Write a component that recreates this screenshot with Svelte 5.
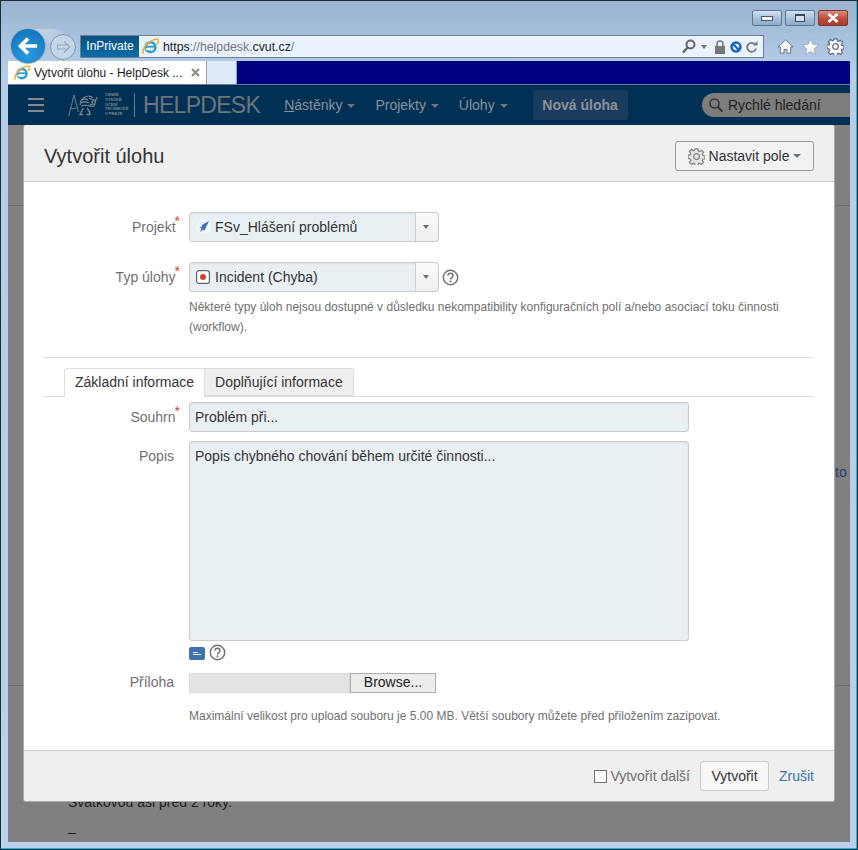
<script>
	let nav = ['Projekty', 'Úlohy'];
</script>

{#snippet ie(size)}
	<svg class="ie" width={size} height={size} viewBox="0 0 16 16">
		<circle cx="8" cy="8.6" r="4.6" fill="none" stroke="#2f9ad8" stroke-width="2.4" />
		<path d="M3.6 8.2h9" stroke="#2f9ad8" stroke-width="1.7" />
		<path d="M3.6 10.6h3.6" stroke="#fff" stroke-width="1.6" />
		<path d="M1.4 14.6C-.4 12 3 6.2 8 3.2c3-1.8 6.4-2.8 7.3-1.7.7.9-.1 2.7-1.3 4.3" fill="none" stroke="#eeb02c" stroke-width="1.5" />
	</svg>
{/snippet}

{#snippet help(color)}
	<svg width="17" height="17" viewBox="0 0 17 17">
		<circle cx="8.5" cy="8.5" r="7.2" fill="#fff" stroke={color} stroke-width="1.4" />
		<path d="M6 6.6c0-3.2 5-3.2 5 0 0 2-2.5 1.9-2.5 3.9" fill="none" stroke={color} stroke-width="1.5" />
		<rect x="7.6" y="11.5" width="1.8" height="1.8" fill={color} />
	</svg>
{/snippet}

{#snippet gear(size, color, fill)}
	<svg width={size} height={size} viewBox="0 0 20 20">
		<path d="M8.3 1h3.4l.5 2.6 1.500.6 2.200-1.500 2.400 2.400-1.500 2.200.6 1.500 2.600.5v3.400l-2.600.5-.6 1.500 1.500 2.200-2.400 2.400-2.200-1.500-1.500.6-.5 2.600H8.300l-.5-2.600-1.500-.6-2.200 1.500-2.400-2.400 1.500-2.200-.6-1.500L0 11.700V8.300l2.600-.5.6-1.500-1.500-2.200 2.400-2.400 2.200 1.500 1.500-.6z" fill={fill} stroke={color} stroke-width="1.5" />
		<circle cx="10" cy="10" r="3.4" fill={fill} stroke={color} stroke-width="1.5" />
	</svg>
{/snippet}

<div class="window">
	<header class="chrome">
		<div class="caption">
			<span class="capbtn"><i class="min"></i></span>
			<span class="capbtn"><i class="max"></i></span>
			<span class="capbtn close">
				<svg width="14" height="10" viewBox="0 0 14 10"><path d="M2.5 1l9 8M11.500 1l-9 8" stroke="#fff" stroke-width="2.6" /></svg>
			</span>
		</div>
		<div class="toolbar">
			<span class="shoulder"></span>
			<span class="back">
				<svg width="22" height="20" viewBox="0 0 22 20"><path d="M11 2.5 3.500 10l7.500 7.500M4 10h16" fill="none" stroke="#fff" stroke-width="3.6" /></svg>
			</span>
			<span class="forward">
				<svg width="15" height="14" viewBox="0 0 15 14"><path d="M8 1.500l5.500 5.500L8 12.500M13 5H1.500v4H13" fill="none" stroke="#9aa9b9" stroke-width="1.2" /></svg>
			</span>
			<div class="address">
				<span class="inprivate">InPrivate</span>
				<span class="favicon">{@render ie(17)}</span>
				<span class="url"><b>https</b>://helpdesk.<b>cvut.cz</b>/</span>
				<span class="addr-icons">
					<svg width="14" height="15" viewBox="0 0 14 15"><circle cx="8.5" cy="5.5" r="4" fill="none" stroke="#666" stroke-width="2" /><path d="M5.5 8.500 1 13.500" stroke="#666" stroke-width="2.4" /></svg>
					<i class="caret small"></i>
					<svg class="lock" width="12" height="14" viewBox="0 0 12 14"><path d="M3 6V4a3 3 0 0 1 6 0v2" fill="none" stroke="#777" stroke-width="1.6" /><rect x="1" y="6" width="10" height="8" fill="#777" /></svg>
					<svg class="block" width="12" height="12" viewBox="0 0 13 13"><circle cx="6.5" cy="6.5" r="4.8" fill="#fff" stroke="#1565c0" stroke-width="2.8" /><path d="M3 3l7 7" stroke="#1565c0" stroke-width="2.6" /></svg>
					<svg class="refresh" width="13" height="14" viewBox="0 0 13 14"><path d="M10.500 5A4.500 4.500 0 1 0 11 8.500" fill="none" stroke="#777" stroke-width="1.8" /><path d="M8 5.500h4.500V1z" fill="#777" /></svg>
				</span>
			</div>
			<div class="tools">
				<svg width="17" height="17" viewBox="0 0 18 17"><path d="M9 1.500 1 9h2.500v6.500h4v-4h3v4h4V9H17z" fill="#fff" stroke="#5f7080" /></svg>
				<svg width="17" height="17" viewBox="0 0 18 17"><path d="M9 .8l2.500 5.400 5.800.7-4.300 4 1.200 5.800L9 13.800l-5.200 2.900L5 10.900l-4.300-4 5.800-.7z" fill="#fff" stroke="#8a99a8" stroke-width=".7" /></svg>
				{@render gear(17, '#5f7080', '#fff')}
			</div>
		</div>
		<div class="tabstrip">
			<div class="tab">
				{@render ie(16)}
				<span class="tab-title">Vytvořit úlohu - HelpDesk ...</span>
				<svg width="9" height="9" viewBox="0 0 9 9"><path d="M1 1l7 7M8 1 1 8" stroke="#8a8a8a" stroke-width="2" /></svg>
			</div>
			<div class="newtab"></div>
		</div>
	</header>

	<main class="page">
		<nav class="navbar">
			<span class="burger"><i></i><i></i><i></i></span>
			<div class="logo">
				<svg width="32" height="24" viewBox="0 0 32 24">
					<g fill="none" stroke="#7f878d">
						<path d="M6 2 .8 23M6 2l4.500 17M2.500 15c2 1 4 1 6-.5" stroke-width=".9" />
						<path d="M12 12c0-5 4-9 9-9 1.500 0 3 .5 3.500 2" stroke-width="1.2" />
						<path d="M14 7c2-1.500 4-1.500 6 0M13 10c2-1.500 5-1.500 8 0M13 13c3-1 6-1 9 0" stroke-width="1.2" />
						<path d="M15 15c-1 3-2 5-3 6.500h3M19 15c2 2 3 4 3 6.500h-3.500M22 13c3 1 5 0 5-3 0-2 1-3 2-6" stroke-width="1.3" />
						<path d="M21 5.500l5 1.500-2 2 1 2-3.500 1" stroke-width="1.2" />
					</g>
				</svg>
				<span class="logo-text">ČESKÉ<br />VYSOKÉ<br />UČENÍ<br />TECHNICKÉ<br />V PRAZE</span>
			</div>
			<span class="brand">HELPDESK</span>
			<span class="nav-item first"><u>N</u>ástěnky <i class="caret"></i></span>
			{#each nav as item}
				<span class="nav-item">{item} <i class="caret"></i></span>
			{/each}
			<span class="new-issue">Nová úloha</span>
			<span class="search">
				<svg width="16" height="16" viewBox="0 0 16 16"><circle cx="6.5" cy="6.5" r="4.5" fill="none" stroke="#333" stroke-width="1.5" /><path d="M10 10l4.500 4.500" stroke="#333" stroke-width="2" /></svg>
				Rychlé hledání
			</span>
		</nav>

		<div class="behind">
			<hr class="line-a" />
			<span class="link-to">to</span>
			<hr class="line-b" />
			<p class="old-a">Svatkovou asi před 2 roky.</p>
			<p class="old-b">_</p>
		</div>

		<section class="dialog">
			<div class="dialog-head">
				<h2>Vytvořit úlohu</h2>
				<button class="config">
					{@render gear(17, '#858585', '#e4e4e4')}
					Nastavit pole <i class="caret"></i>
				</button>
			</div>
			<div class="dialog-body">
				<div class="row">
					<label>Projekt<sup>*</sup></label>
					<div class="select">
						<span class="value project">
							<svg width="16" height="16" viewBox="0 0 16 16"><circle cx="8" cy="8" r="7.5" fill="#f2f6fa" /><path d="M13 2 6.500 5.500l-1 2.500-2 .5 2 1L4 13l3.500-2.500 1 1.500 1-3z" fill="#3e73ad" /></svg>
							FSv_Hlášení problémů
						</span>
						<span class="arrow"><i class="caret small dark"></i></span>
					</div>
				</div>
				<div class="row second">
					<label>Typ úlohy<sup>*</sup></label>
					<div class="select">
						<span class="value">
							<svg width="14" height="14" viewBox="0 0 14 14"><rect x=".6" y=".6" width="12.8" height="12.8" rx="2.5" fill="#fff" stroke="#666" stroke-width="1.2" /><circle cx="7" cy="7" r="3" fill="#d04437" /></svg>
							Incident (Chyba)
						</span>
						<span class="arrow"><i class="caret small dark"></i></span>
					</div>
					<span class="help">{@render help('#707070')}</span>
				</div>
				<p class="note type-note">Některé typy úloh nejsou dostupné v důsledku nekompatibility konfiguračních polí a/nebo asociací toku činnosti (workflow).</p>
				<hr class="divider" />
				<div class="tabs">
					<span class="form-tab active">Základní informace</span>
					<span class="form-tab">Doplňující informace</span>
				</div>
				<div class="row summary">
					<label>Souhrn<sup>*</sup></label>
					<div class="input">Problém při...</div>
				</div>
				<div class="row description">
					<label>Popis</label>
					<div class="input area">Popis chybného chování během určité činnosti...</div>
				</div>
				<div class="under-area">
					<span class="wiki"><i></i><i></i></span>
					{@render help('#707070')}
				</div>
				<div class="row attach">
					<label>Příloha</label>
					<div class="file"><span class="file-name"></span><span class="browse">Browse...</span></div>
				</div>
				<p class="note attach-note">Maximální velikost pro upload souboru je 5.00 MB. Větší soubory můžete před přiložením zazipovat.</p>
			</div>
			<div class="dialog-foot">
				<span class="check"></span>
				<span class="more">Vytvořit další</span>
				<button class="create">Vytvořit</button>
				<a href="#top" class="cancel">Zrušit</a>
			</div>
		</section>
	</main>
</div>

<style>
	:global(body) {
		margin: 0;
		font-family: 'Liberation Sans', Arial, sans-serif;
	}

	.window {
		width: 858px;
		height: 850px;
		box-sizing: border-box;
		display: flex;
		flex-direction: column;
		background: linear-gradient(#9ab3cf 0, #b5cde8 70px, #b9d1ea 100%);
		border: 1px solid #1d2b33;
		box-shadow: inset -1px -1px 0 #17b7dc;
		overflow: hidden;
	}

	.chrome {
		height: 84px;
		flex: none;
		display: flex;
		flex-direction: column;
	}

	.caption {
		height: 16px;
		margin-top: 9px;
		padding-right: 9px;
		display: flex;
		justify-content: flex-end;
		gap: 3px;
	}

	.capbtn {
		width: 30px;
		height: 16px;
		box-sizing: border-box;
		border: 1px solid #5f7690;
		border-radius: 2px;
		background: linear-gradient(#d4e2f0, #a8c1da 50%, #8fabc8);
		display: flex;
		align-items: center;
		justify-content: center;
	}

	.capbtn.close {
		background: linear-gradient(#d98d80, #c0503f 50%, #a93a2c);
		border-color: #7d3a30;
	}

	.min {
		width: 10px;
		height: 3px;
		background: #fff;
		border: 1px solid #45566a;
	}

	.max {
		width: 8px;
		height: 5px;
		border: 1px solid #33465c;
		border-top-width: 2px;
		background: #d6e2ee;
	}

	.toolbar {
		height: 23px;
		margin-top: 9px;
		display: flex;
		align-items: center;
		position: relative;
	}

	.shoulder {
		position: absolute;
		left: 26px;
		top: -6px;
		width: 40px;
		height: 14px;
		background: linear-gradient(100deg, #c9d6e3, #b1c8e0);
		border-radius: 8px 14px 0 0;
	}

	.back {
		position: absolute;
		left: 9px;
		top: -7px;
		width: 36px;
		height: 36px;
		border-radius: 50%;
		background: radial-gradient(circle at 50% 75%, #2b9ae0, #0f6eb4);
		border: 1px solid #9fb5c9;
		box-sizing: border-box;
		display: flex;
		align-items: center;
		justify-content: center;
		z-index: 1;
	}

	.forward {
		margin-left: 49px;
		width: 26px;
		height: 26px;
		box-sizing: border-box;
		border: 1px solid #8497ab;
		border-radius: 50%;
		background: #c3d5e9;
		display: flex;
		align-items: center;
		justify-content: center;
		flex: none;
		position: relative;
	}

	.address {
		margin-left: 4px;
		width: 684px;
		height: 23px;
		box-sizing: border-box;
		background: #eaf2fb;
		border: 1px solid #6f7f90;
		display: flex;
		align-items: center;
		flex: none;
	}

	.inprivate {
		width: 58px;
		height: 21px;
		flex: none;
		background: linear-gradient(#09507f, #0b6ca8);
		color: #fff;
		font-size: 12px;
		line-height: 21px;
		text-align: center;
	}

	.favicon {
		margin-left: 3px;
		display: flex;
	}

	.url {
		margin-left: 4px;
		font-size: 12.3px;
		color: #777;
		flex: 1;
	}

	.url b {
		font-weight: normal;
		color: #222;
	}

	.addr-icons {
		display: flex;
		align-items: center;
		padding-right: 5px;
	}

	.addr-icons .small {
		margin: 0 7px 0 5px;
		border-top-color: #777;
		border-width: 4px 3.5px 0;
	}

	.block {
		margin: 0 3px 0 4px;
	}

	.tools {
		margin-left: 13px;
		display: flex;
		align-items: center;
		gap: 8px;
	}

	.tabstrip {
		height: 24px;
		box-sizing: border-box;
		margin: 3px 7px 0;
		background: #000080;
		display: flex;
		border-bottom: 1px solid #6b7f90;
	}

	.tab {
		width: 199px;
		box-sizing: border-box;
		background: #fff;
		border-right: 1px solid #8ea2b7;
		display: flex;
		align-items: center;
		padding: 0 6px;
		gap: 4px;
	}

	.tab-title {
		font-size: 12px;
		color: #222;
		flex: 1;
		white-space: nowrap;
	}

	.newtab {
		width: 29px;
		background: #dfeaf7;
		border-right: 1px solid #8ea2b7;
	}

	.page {
		position: relative;
		flex: 1;
		margin: 0 7px 7px;
		background: #808080;
		min-height: 0;
	}

	.navbar {
		height: 40px;
		background: #003155;
		display: flex;
		align-items: center;
		color: #8b9196;
		font-size: 14px;
		box-sizing: border-box;
	}

	.burger {
		margin-left: 20px;
		width: 16px;
		display: flex;
		flex-direction: column;
		gap: 3px;
	}

	.burger i {
		height: 2px;
		background: #858a8f;
		margin-bottom: 1px;
	}

	.logo {
		margin-left: 24px;
		display: flex;
		align-items: center;
		gap: 5px;
		padding-right: 9px;
		border-right: 1px solid #717b84;
		height: 24px;
	}

	.logo-text {
		font-size: 4px;
		line-height: 4.7px;
		font-weight: bold;
		width: 20px;
		white-space: nowrap;
		color: #7f878d;
	}

	.brand {
		margin-left: 8px;
		font-size: 23px;
		letter-spacing: -.7px;
		color: #6f757b;
	}

	.nav-item {
		white-space: nowrap;
		margin-left: 20px;
	}

	.nav-item.first {
		margin-left: 24px;
	}

	.nav-item i {
		margin-left: 1px;
	}

	.caret {
		display: inline-block;
		width: 0;
		height: 0;
		vertical-align: middle;
		border: 4px solid transparent;
		border-top-color: #6f757b;
		border-bottom: 0;
	}

	.caret.small {
		border-width: 3px;
		border-bottom: 0;
		border-top-width: 4px;
	}

	.caret.dark {
		border-top-color: #707070;
	}

	.new-issue {
		margin-left: 25px;
		width: 95px;
		height: 30px;
		line-height: 30px;
		text-align: center;
		background: #1b3b5e;
		border-radius: 3px;
		font-weight: bold;
		white-space: nowrap;
	}

	.search {
		margin-left: auto;
		width: 148px;
		height: 24px;
		box-sizing: border-box;
		border-radius: 12px 0 0 12px;
		background: #7d7d7d;
		color: #222;
		display: flex;
		align-items: center;
		gap: 4px;
		padding-left: 6px;
		white-space: nowrap;
	}

	.behind {
		position: absolute;
		inset: 40px 0 0 0;
		overflow: hidden;
		font-size: 14px;
		color: #222;
	}

	.behind hr {
		position: absolute;
		left: 0;
		right: 0;
		margin: 0;
		border: 0;
		border-top: 1px solid #6c6c6c;
	}

	.line-a {
		top: 80px;
	}

	.line-b {
		top: 560px;
	}

	.link-to {
		position: absolute;
		left: 827px;
		top: 339px;
		color: #1a4168;
	}

	.behind p {
		position: absolute;
		left: 60px;
		margin: 0;
	}

	.old-a {
		top: 669px;
	}

	.old-b {
		top: 693px;
	}

	.dialog {
		position: absolute;
		left: 15px;
		top: 40px;
		width: 812px;
		height: 677px;
		box-sizing: border-box;
		background: #fff;
		border: 1px solid #a9a9a9;
		border-top: 0;
		border-radius: 3px;
		display: flex;
		flex-direction: column;
		color: #333;
		font-size: 14px;
	}

	.dialog-head {
		height: 57px;
		flex: none;
		box-sizing: border-box;
		background: #efefef;
		border-bottom: 1px solid #ccc;
		border-radius: 3px 3px 0 0;
		display: flex;
		align-items: center;
		justify-content: space-between;
		padding: 6px 20px 0;
	}

	h2 {
		margin: 0;
		font-size: 20px;
		font-weight: normal;
		color: #333;
	}

	.config {
		width: 139px;
		height: 30px;
		box-sizing: border-box;
		border: 1px solid #999;
		border-radius: 3px;
		background: #f2f2f2;
		font: inherit;
		color: #333;
		display: flex;
		align-items: center;
		justify-content: center;
		gap: 4px;
		padding: 0;
	}

	.dialog-body {
		flex: 1;
		padding-top: 30px;
	}

	.row {
		display: flex;
		align-items: center;
	}

	label {
		width: 150px;
		text-align: right;
		margin-right: 15px;
		color: #707070;
		flex: none;
	}

	sup {
		color: #d04437;
		font-size: 14px;
		line-height: 0;
		margin-right: -6px;
		margin-left: -1px;
	}

	.select {
		width: 250px;
		height: 30px;
		box-sizing: border-box;
		border: 1px solid #ccc;
		border-radius: 3px;
		background: #e9f0f3;
		display: flex;
		box-shadow: inset 0 1px 2px #ddd;
	}

	.value {
		flex: 1;
		display: flex;
		align-items: center;
		gap: 5px;
		padding-left: 6px;
		color: #333;
	}

	.value.project {
		gap: 3px;
	}

	.arrow {
		width: 23px;
		box-sizing: border-box;
		padding-right: 3px;
		background: linear-gradient(#fafafa, #efefef);
		border-left: 1px solid #ccc;
		border-radius: 0 3px 3px 0;
		display: flex;
		align-items: center;
		justify-content: center;
	}

	.second {
		margin-top: 20px;
	}

	.help {
		margin-left: 3px;
		display: flex;
	}

	.note {
		margin: 0 0 0 165px;
		width: 620px;
		font-size: 12px;
		line-height: 20px;
		color: #707070;
	}

	.type-note {
		margin-top: 5px;
	}

	.divider {
		margin: 20px 20px 0;
		border: 0;
		border-top: 1px solid #ddd;
	}

	.tabs {
		margin: 10px 20px 0;
		padding-left: 20px;
		height: 29px;
		box-sizing: border-box;
		border-bottom: 1px solid #ddd;
		display: flex;
	}

	.form-tab {
		height: 28px;
		box-sizing: border-box;
		padding: 0 10px;
		line-height: 27px;
		background: #efefef;
		border: 1px solid #ddd;
		border-left: 0;
		border-radius: 0 3px 0 0;
	}

	.form-tab.active {
		height: 29px;
		background: #fff;
		border-left: 1px solid #ddd;
		border-bottom: 0;
		border-radius: 3px 0 0 0;
	}

	.summary {
		margin-top: 5px;
	}

	.input {
		width: 500px;
		height: 30px;
		box-sizing: border-box;
		border: 1px solid #ccc;
		border-radius: 3px;
		background: #e9f0f3;
		padding: 0 5px;
		line-height: 28px;
		color: #333;
		box-shadow: inset 0 1px 2px #ddd;
	}

	.description {
		margin-top: 9px;
		align-items: flex-start;
	}

	.description label {
		line-height: 30px;
	}

	.input.area {
		height: 200px;
	}

	.under-area {
		margin: 1px 0 0 165px;
		height: 20px;
		display: flex;
		align-items: center;
		gap: 4px;
	}

	.wiki {
		width: 16px;
		height: 13px;
		box-sizing: border-box;
		background: #3e73ad;
		border-radius: 2px;
		display: flex;
		flex-direction: column;
		justify-content: center;
		gap: 1px;
		padding-left: 4px;
		margin-top: 2px;
	}

	.wiki i {
		height: 1px;
		width: 5px;
		background: #fff;
	}

	.wiki i + i {
		width: 8px;
	}

	.attach {
		margin-top: 11px;
		align-items: flex-start;
	}

	.attach label {
		line-height: 18px;
	}

	.file {
		display: flex;
		height: 20px;
		color: #222;
	}

	.file-name {
		width: 161px;
		box-sizing: border-box;
		background: #e4e4e4;
		border: 1px solid #d8d8d8;
	}

	.browse {
		width: 86px;
		box-sizing: border-box;
		border: 1px solid #adadad;
		background: #ececec;
		text-align: center;
		line-height: 17px;
	}

	.attach-note {
		margin-top: 13px;
	}

	.dialog-foot {
		height: 51px;
		flex: none;
		box-sizing: border-box;
		background: #efefef;
		border-top: 1px solid #ccc;
		border-radius: 0 0 3px 3px;
		display: flex;
		align-items: center;
		padding-right: 20px;
		justify-content: flex-end;
	}

	.check {
		width: 13px;
		height: 13px;
		box-sizing: border-box;
		border: 1px solid #707070;
		background: #fff;
		margin-right: 3px;
	}

	.more {
		color: #707070;
		margin-right: 10px;
	}

	.create {
		width: 69px;
		height: 30px;
		box-sizing: border-box;
		border: 1px solid #ccc;
		border-radius: 3px;
		background: #f7f7f7;
		font: inherit;
		color: #333;
		padding: 0;
	}

	.cancel {
		margin-left: 10px;
		color: #3b73af;
		text-decoration: none;
	}
</style>
